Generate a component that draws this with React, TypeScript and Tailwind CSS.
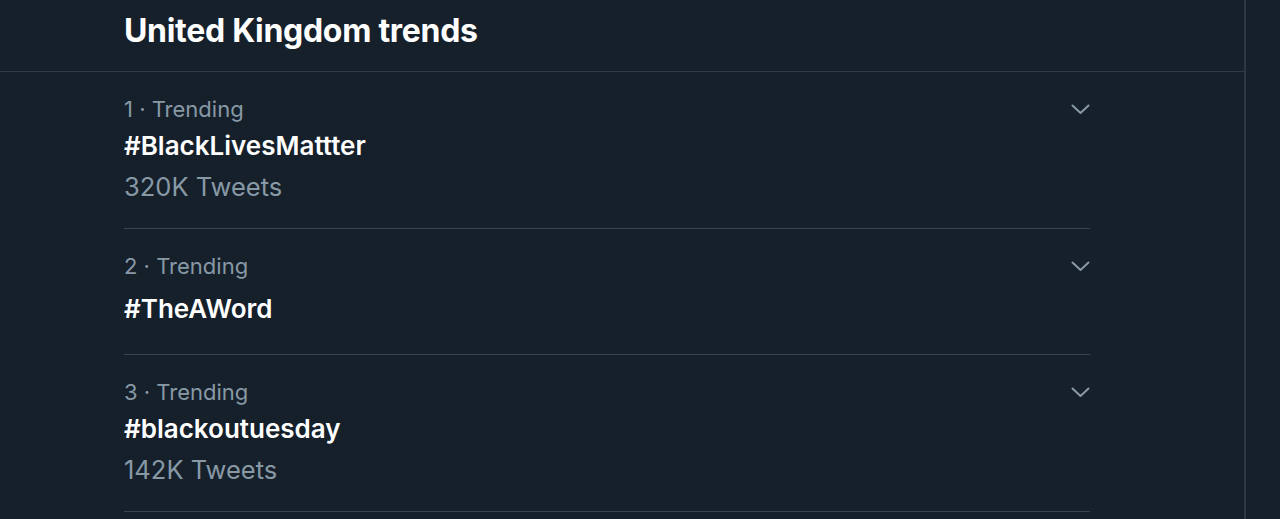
const trends = [
  { rank: 1, tag: '#BlackLivesMattter', count: '320K Tweets' },
  { rank: 2, tag: '#TheAWord', count: null },
  { rank: 3, tag: '#blackoutuesday', count: '142K Tweets' },
];

function Chevron() {
  return (
    <svg width="19" height="11" viewBox="0 0 19 11" fill="none" className="text-[#8899a6]">
      <polyline points="1.5,1.5 9.5,9 17.5,1.5" stroke="currentColor" strokeWidth="2" strokeLinecap="round" strokeLinejoin="round" />
    </svg>
  );
}

function TrendRow({ rank, tag, count }: { rank: number; tag: string; count: string | null }) {
  return (
    <div className={`border-b border-[#38444d] pt-[22px] ${count ? 'pb-[21px]' : 'pb-[24px]'}`}>
      <div className="flex items-center justify-between">
        <span className="text-[22px] leading-[30px] text-[#8899a6]">{rank} · Trending</span>
        <Chevron />
      </div>
      <div className={`text-[26px] leading-[42px] font-semibold text-white ${count ? 'mt-[1px]' : 'mt-[7px]'}`}>{tag}</div>
      {count && <div className="text-[25.5px] leading-[40px] text-[#8899a6]">{count}</div>}
    </div>
  );
}

export default function App() {
  return (
    <div className="h-[519px] w-[1280px] overflow-hidden bg-[#15202b] flex" style={{ fontFamily: 'Inter, "Noto Sans", sans-serif' }}>
      <div className="w-[1246px] flex-shrink-0 border-r-2 border-[#2c3741]">
        <header className="h-[72px] border-b border-[#2f3b45] pl-[124px] flex items-center">
          <h1 className="text-[32px] font-bold text-white tracking-[-0.3px] -mt-[10px]">United Kingdom trends</h1>
        </header>
        <div className="pl-[124px] w-[1090px]">
          {trends.map(t => (
            <TrendRow key={t.rank} {...t} />
          ))}
        </div>
      </div>
    </div>
  );
}
